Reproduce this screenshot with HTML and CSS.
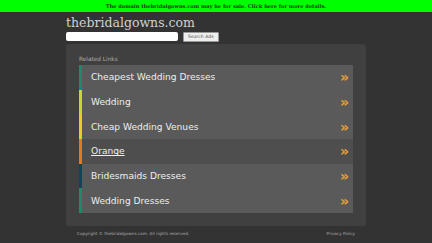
FILE: index.html
```html
<!DOCTYPE html>
<html>
<head>
<meta charset="utf-8">
<link rel="stylesheet" href="styles.css">
</head>
<body>
<div class="topbar">The domain thebridalgowns.com may be for sale. Click here for more details.</div>
<div class="wrap">
  <div class="title">thebridalgowns.com</div>
  <div class="search">
    <div class="input"></div>
    <div class="btn">Search Ads</div>
  </div>
  <div class="panel">
    <div class="label">Related Links</div>
    <div class="links">
      <div class="row c1"><span class="txt">Cheapest Wedding Dresses</span><span class="arr">»</span></div>
      <div class="row c2"><span class="txt">Wedding</span><span class="arr">»</span></div>
      <div class="row c3"><span class="txt">Cheap Wedding Venues</span><span class="arr">»</span></div>
      <div class="row c4 hover"><span class="txt u">Orange</span><span class="arr">»</span></div>
      <div class="row c5"><span class="txt">Bridesmaids Dresses</span><span class="arr">»</span></div>
      <div class="row c6"><span class="txt">Wedding Dresses</span><span class="arr">»</span></div>
    </div>
  </div>
  <div class="footer">
    <span>Copyright © thebridalgowns.com.  All rights reserved.</span>
    <span>Privacy Policy</span>
  </div>
</div>
</body>
</html>
```
FILE: styles.css
```css
html, body { margin: 0; padding: 0; }
body { background: #333333; width: 432px; height: 243px; overflow: hidden; font-family: "DejaVu Sans", sans-serif; }
.topbar {
  height: 12px; background: #00ff00; color: #1a3a1a;
  font-family: "DejaVu Serif", serif; font-weight: bold; font-size: 5.1px;
  display: flex; align-items: center; justify-content: center;
}
.wrap { width: 300px; margin-left: 66px; }
.title { font-family: "DejaVu Serif", serif; font-size: 12.5px; color: #d0d0d0; margin-top: 3px; height: 16px; line-height: 16px; }
.search { display: flex; align-items: center; gap: 5px; height: 11px; }
.input { width: 112px; height: 9px; background: #fff; border-radius: 2px; }
.btn { background: #eeeeee; color: #555; font-size: 4.6px; padding: 0 4px; height: 8px; line-height: 8px; border-radius: 1px; border: 0.5px solid #999; }
.panel { margin-top: 2px; background: #404040; border-radius: 3px; padding: 12px 13px 13px 13px; height: 157px; }
.label { font-size: 5.8px; color: #aaa; height: 9px; line-height: 6px; }
.links { display: flex; flex-direction: column; }
.row { height: 24.7px; background: #5a5a5a; border-left: 3px solid; display: flex; align-items: center; justify-content: space-between; padding: 0 4px 0 9px; box-sizing: border-box; }
.row.hover { background: #4e4e4e; }
.c1 { border-color: #1e8a6a; }
.c2 { border-color: #c8d82a; }
.c3 { border-color: #e8d020; }
.c4 { border-color: #e87818; }
.c5 { border-color: #114455; }
.c6 { border-color: #1e8a6a; }
.txt { color: #eeeeee; font-size: 9.1px; }
.txt.u { text-decoration: underline; }
.arr { color: #e8a030; font-size: 14px; font-weight: bold; line-height: 1; }
.footer { display: flex; justify-content: space-between; font-size: 4.2px; color: #aaa; margin-top: 5px; padding: 0 11px 0 11px; }
```
